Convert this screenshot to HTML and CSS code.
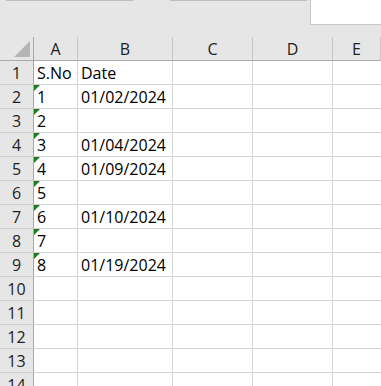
FILE: index.html
```html
<!DOCTYPE html>
<html lang="en">
<head>
  <meta charset="UTF-8" />
  <title>Sheet1</title>
  <link rel="stylesheet" href="styles.css">
</head>
<body>
  <div class="toolbar">
    <div class="tab-line tab-one"></div>
    <div class="tab-line tab-two"></div>
    <div class="name-box"></div>
  </div>

  <div class="sheet">
    <div class="row head">
      <div class="cell rh corner"><span class="corner-mark"></span></div>
      <div class="cell ch col-a">A</div>
      <div class="cell ch col-b">B</div>
      <div class="cell ch col-c">C</div>
      <div class="cell ch col-d">D</div>
      <div class="cell ch col-e">E</div>
    </div>

    <div class="row">
      <div class="cell rh">1</div>
      <div class="cell col-a">S.No</div>
      <div class="cell col-b">Date</div>
      <div class="cell col-c"></div>
      <div class="cell col-d"></div>
      <div class="cell col-e"></div>
    </div>
    <div class="row">
      <div class="cell rh">2</div>
      <div class="cell col-a txt">1</div>
      <div class="cell col-b">01/02/2024</div>
      <div class="cell col-c"></div>
      <div class="cell col-d"></div>
      <div class="cell col-e"></div>
    </div>
    <div class="row">
      <div class="cell rh">3</div>
      <div class="cell col-a txt">2</div>
      <div class="cell col-b"></div>
      <div class="cell col-c"></div>
      <div class="cell col-d"></div>
      <div class="cell col-e"></div>
    </div>
    <div class="row">
      <div class="cell rh">4</div>
      <div class="cell col-a txt">3</div>
      <div class="cell col-b">01/04/2024</div>
      <div class="cell col-c"></div>
      <div class="cell col-d"></div>
      <div class="cell col-e"></div>
    </div>
    <div class="row">
      <div class="cell rh">5</div>
      <div class="cell col-a txt">4</div>
      <div class="cell col-b">01/09/2024</div>
      <div class="cell col-c"></div>
      <div class="cell col-d"></div>
      <div class="cell col-e"></div>
    </div>
    <div class="row">
      <div class="cell rh">6</div>
      <div class="cell col-a txt">5</div>
      <div class="cell col-b"></div>
      <div class="cell col-c"></div>
      <div class="cell col-d"></div>
      <div class="cell col-e"></div>
    </div>
    <div class="row">
      <div class="cell rh">7</div>
      <div class="cell col-a txt">6</div>
      <div class="cell col-b">01/10/2024</div>
      <div class="cell col-c"></div>
      <div class="cell col-d"></div>
      <div class="cell col-e"></div>
    </div>
    <div class="row">
      <div class="cell rh">8</div>
      <div class="cell col-a txt">7</div>
      <div class="cell col-b"></div>
      <div class="cell col-c"></div>
      <div class="cell col-d"></div>
      <div class="cell col-e"></div>
    </div>
    <div class="row">
      <div class="cell rh">9</div>
      <div class="cell col-a txt">8</div>
      <div class="cell col-b">01/19/2024</div>
      <div class="cell col-c"></div>
      <div class="cell col-d"></div>
      <div class="cell col-e"></div>
    </div>
    <div class="row">
      <div class="cell rh">10</div>
      <div class="cell col-a"></div>
      <div class="cell col-b"></div>
      <div class="cell col-c"></div>
      <div class="cell col-d"></div>
      <div class="cell col-e"></div>
    </div>
    <div class="row">
      <div class="cell rh">11</div>
      <div class="cell col-a"></div>
      <div class="cell col-b"></div>
      <div class="cell col-c"></div>
      <div class="cell col-d"></div>
      <div class="cell col-e"></div>
    </div>
    <div class="row">
      <div class="cell rh">12</div>
      <div class="cell col-a"></div>
      <div class="cell col-b"></div>
      <div class="cell col-c"></div>
      <div class="cell col-d"></div>
      <div class="cell col-e"></div>
    </div>
    <div class="row">
      <div class="cell rh">13</div>
      <div class="cell col-a"></div>
      <div class="cell col-b"></div>
      <div class="cell col-c"></div>
      <div class="cell col-d"></div>
      <div class="cell col-e"></div>
    </div>
    <div class="row">
      <div class="cell rh">14</div>
      <div class="cell col-a"></div>
      <div class="cell col-b"></div>
      <div class="cell col-c"></div>
      <div class="cell col-d"></div>
      <div class="cell col-e"></div>
    </div>
  </div>
</body>
</html>
```

FILE: styles.css
```css
body {
  margin: 0;
  background-color: #ffffff;
  font-family: 'Open Sans', sans-serif;
  font-size: 16px;
  color: #000000;
  overflow: hidden;
}

/* Top strip above the grid */
.toolbar {
  display: flex;
  align-items: flex-start;
  height: 37px;
  background-color: #e6e6e6;
}

.tab-line {
  height: 1px;
  background-color: #bdbdbd;
}

.tab-one {
  width: 127px;
  margin-left: 6px;
}

.tab-two {
  width: 137px;
  margin-left: 37px;
}

.name-box {
  margin-left: 3px;
  flex: 1;
  height: 24px;
  background-color: #ffffff;
  border-left: 1px solid #c6c6c6;
  border-bottom: 1px solid #c6c6c6;
}

/* Grid */
.sheet {
  display: flex;
  flex-direction: column;
}

.row {
  display: flex;
  height: 24px;
}

.cell {
  box-sizing: border-box;
  height: 24px;
  border-right: 1px solid #d4d4d4;
  border-bottom: 1px solid #d4d4d4;
  padding-left: 3px;
  line-height: 24px;
  white-space: nowrap;
  position: relative;
}

.col-a { width: 44px; }
.col-b { width: 95px; }
.col-c { width: 80px; }
.col-d { width: 80px; }
.col-e { flex: 1; border-right: none; }

/* Row and column headers */
.rh {
  width: 34px;
  padding-left: 0;
  text-align: center;
  background-color: #e6e6e6;
  border-right: 1px solid #a6a6a6;
  border-bottom: 1px solid #d0d0d0;
  color: #222222;
}

.ch {
  padding-left: 0;
  text-align: center;
  background-color: #e6e6e6;
  border-right: 1px solid #c6c6c6;
  border-bottom: 1px solid #ababab;
  color: #222222;
}

.head .rh {
  border-bottom: 1px solid #ababab;
}

.corner-mark {
  position: absolute;
  left: 14px;
  top: 4px;
  width: 16px;
  height: 16px;
  background-color: #b5b5b5;
  clip-path: polygon(100% 0, 100% 100%, 0 100%);
}

/* Number stored as text marker */
.txt::before {
  content: "";
  position: absolute;
  left: 0;
  top: 0;
  width: 6px;
  height: 6px;
  background-color: #1f7a1f;
  clip-path: polygon(0 0, 100% 0, 0 100%);
}
```
